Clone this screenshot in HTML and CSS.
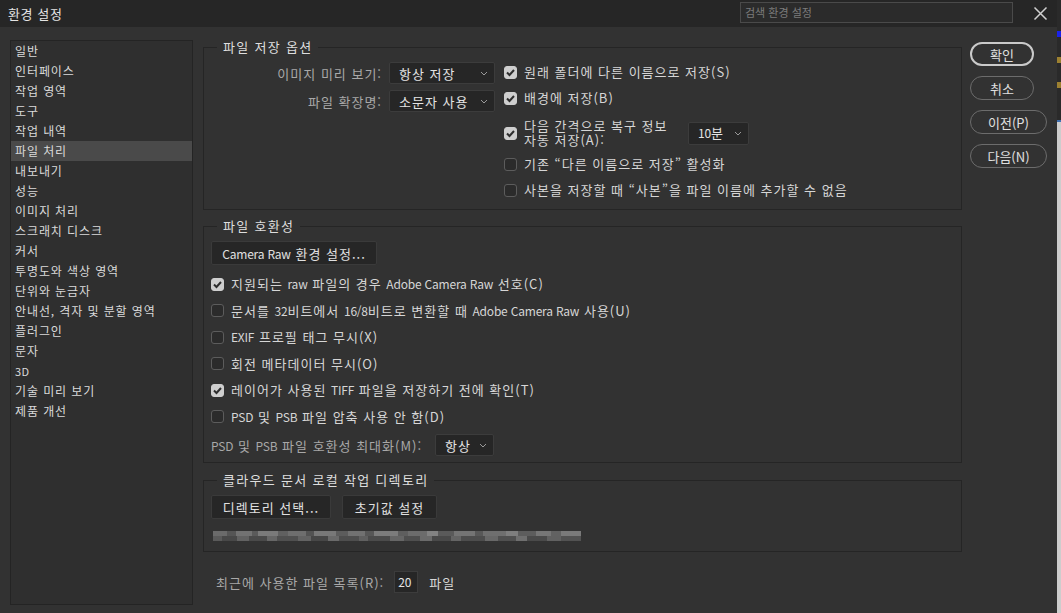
FILE: index.html
```html
<!DOCTYPE html>
<html lang="ko">
<head>
<meta charset="utf-8">
<title>환경 설정</title>
<link rel="stylesheet" href="styles.css">
</head>
<body>
<div class="screen">
  <div class="dialog">
    <div class="titlebar">
      <div class="title">환경 설정</div>
      <div class="search">검색 환경 설정</div>
      <svg class="close" width="15" height="15" viewBox="0 0 15 15"><path d="M1.5 1.5 L13.5 13.5 M13.5 1.5 L1.5 13.5" stroke="#d0d0d0" stroke-width="1.5" fill="none"/></svg>
    </div>
    <div class="main">
      <ul class="nav">
        <li>일반</li>
        <li>인터페이스</li>
        <li>작업 영역</li>
        <li>도구</li>
        <li>작업 내역</li>
        <li class="sel">파일 처리</li>
        <li>내보내기</li>
        <li>성능</li>
        <li>이미지 처리</li>
        <li>스크래치 디스크</li>
        <li>커서</li>
        <li>투명도와 색상 영역</li>
        <li>단위와 눈금자</li>
        <li>안내선, 격자 및 분할 영역</li>
        <li>플러그인</li>
        <li>문자</li>
        <li class="nav-lat">3D</li>
        <li>기술 미리 보기</li>
        <li>제품 개선</li>
      </ul>

      <div class="content">
        <fieldset class="group g1">
          <legend>파일 저장 옵션</legend>
          <div class="g1-cols">
            <div class="g1-left">
              <div class="frow">
                <span class="lbl">이미지 미리 보기:</span>
                <div class="select s-preview"><span>항상 저장</span><svg class="chev" width="8" height="5" viewBox="0 0 8 5"><path d="M1 1 L4 4 L7 1" stroke="#9a9a9a" fill="none"/></svg></div>
              </div>
              <div class="frow">
                <span class="lbl">파일 확장명:</span>
                <div class="select s-preview"><span>소문자 사용</span><svg class="chev" width="8" height="5" viewBox="0 0 8 5"><path d="M1 1 L4 4 L7 1" stroke="#9a9a9a" fill="none"/></svg></div>
              </div>
            </div>
            <div class="g1-right">
              <div class="cbrow"><span class="cb on"><svg width="13" height="13" viewBox="0 0 13 13"><path d="M3 6.5 L5.5 9 L10 4" stroke="#2e2e2e" stroke-width="2" fill="none"/></svg></span><span>원래 폴더에 다른 이름으로 저장(S)</span></div>
              <div class="cbrow"><span class="cb on"><svg width="13" height="13" viewBox="0 0 13 13"><path d="M3 6.5 L5.5 9 L10 4" stroke="#2e2e2e" stroke-width="2" fill="none"/></svg></span><span>배경에 저장(B)</span></div>
              <div class="cbrow tall"><span class="cb on"><svg width="13" height="13" viewBox="0 0 13 13"><path d="M3 6.5 L5.5 9 L10 4" stroke="#2e2e2e" stroke-width="2" fill="none"/></svg></span><span class="twoline">다음 간격으로 복구 정보<br>자동 저장(A):</span>
                <div class="select s-min"><span><span class="lat">10</span>분</span><svg class="chev" width="8" height="5" viewBox="0 0 8 5"><path d="M1 1 L4 4 L7 1" stroke="#9a9a9a" fill="none"/></svg></div>
              </div>
              <div class="cbrow"><span class="cb"></span><span>기존 “다른 이름으로 저장” 활성화</span></div>
              <div class="cbrow"><span class="cb"></span><span>사본을 저장할 때 “사본”을 파일 이름에 추가할 수 없음</span></div>
            </div>
          </div>
        </fieldset>

        <fieldset class="group g2">
          <legend>파일 호환성</legend>
          <div class="btn btn-raw"><span><span class="lat">Camera Raw</span> 환경 설정...</span></div>
          <div class="cblist">
            <div class="cbrow r2"><span class="cb on"><svg width="13" height="13" viewBox="0 0 13 13"><path d="M3 6.5 L5.5 9 L10 4" stroke="#2e2e2e" stroke-width="2" fill="none"/></svg></span><span>지원되는 <span class="lat">raw</span> 파일의 경우 <span class="lat">Adobe Camera Raw</span> 선호(C)</span></div>
            <div class="cbrow r2"><span class="cb"></span><span>문서를 <span class="lat">32</span>비트에서 <span class="lat">16/8</span>비트로 변환할 때 <span class="lat">Adobe Camera Raw</span> 사용(U)</span></div>
            <div class="cbrow r2"><span class="cb"></span><span><span class="lat">EXIF</span> 프로필 태그 무시(X)</span></div>
            <div class="cbrow r2"><span class="cb"></span><span>회전 메타데이터 무시(O)</span></div>
            <div class="cbrow r2"><span class="cb on"><svg width="13" height="13" viewBox="0 0 13 13"><path d="M3 6.5 L5.5 9 L10 4" stroke="#2e2e2e" stroke-width="2" fill="none"/></svg></span><span>레이어가 사용된 <span class="lat">TIFF</span> 파일을 저장하기 전에 확인(T)</span></div>
            <div class="cbrow r2"><span class="cb"></span><span><span class="lat">PSD</span> 및 <span class="lat">PSB</span> 파일 압축 사용 안 함(D)</span></div>
          </div>
          <div class="psdrow">
            <span class="lbl"><span class="lat">PSD</span> 및 <span class="lat">PSB</span> 파일 호환성 최대화(M):</span>
            <div class="select s-psd"><span>항상</span><svg class="chev" width="8" height="5" viewBox="0 0 8 5"><path d="M1 1 L4 4 L7 1" stroke="#9a9a9a" fill="none"/></svg></div>
          </div>
        </fieldset>

        <fieldset class="group g3">
          <legend>클라우드 문서 로컬 작업 디렉토리</legend>
          <div class="btnrow">
            <div class="btn btn-dir">디렉토리 선택...</div>
            <div class="btn btn-reset">초기값 설정</div>
          </div>
          <svg class="blur" width="368" height="10" viewBox="0 0 368 10">
            <rect x="0" y="0" width="368" height="10" fill="#4c4c4c"/>
            <rect x="0" y="0" width="14" height="5" fill="#6a6a6a"/>
            <rect x="14" y="0" width="9" height="5" fill="#555"/>
            <rect x="23" y="0" width="16" height="5" fill="#727272"/>
            <rect x="39" y="0" width="6" height="5" fill="#5a5a5a"/>
            <rect x="45" y="0" width="20" height="5" fill="#7a7a7a"/>
            <rect x="65" y="0" width="10" height="5" fill="#606060"/>
            <rect x="75" y="0" width="18" height="5" fill="#6e6e6e"/>
            <rect x="93" y="0" width="8" height="5" fill="#535353"/>
            <rect x="101" y="0" width="22" height="5" fill="#787878"/>
            <rect x="123" y="0" width="12" height="5" fill="#5c5c5c"/>
            <rect x="135" y="0" width="17" height="5" fill="#717171"/>
            <rect x="152" y="0" width="9" height="5" fill="#575757"/>
            <rect x="161" y="0" width="24" height="5" fill="#7c7c7c"/>
            <rect x="185" y="0" width="10" height="5" fill="#5e5e5e"/>
            <rect x="195" y="0" width="19" height="5" fill="#6c6c6c"/>
            <rect x="214" y="0" width="11" height="5" fill="#828282"/>
            <rect x="225" y="0" width="16" height="5" fill="#5a5a5a"/>
            <rect x="241" y="0" width="21" height="5" fill="#747474"/>
            <rect x="262" y="0" width="8" height="5" fill="#585858"/>
            <rect x="270" y="0" width="23" height="5" fill="#6f6f6f"/>
            <rect x="293" y="0" width="12" height="5" fill="#7e7e7e"/>
            <rect x="305" y="0" width="18" height="5" fill="#5d5d5d"/>
            <rect x="323" y="0" width="15" height="5" fill="#767676"/>
            <rect x="338" y="0" width="10" height="5" fill="#626262"/>
            <rect x="348" y="0" width="20" height="5" fill="#7a7a7a"/>
            <rect x="0" y="5" width="9" height="5" fill="#5a5a5a"/>
            <rect x="9" y="5" width="15" height="5" fill="#484848"/>
            <rect x="24" y="5" width="12" height="5" fill="#626262"/>
            <rect x="36" y="5" width="18" height="5" fill="#4a4a4a"/>
            <rect x="54" y="5" width="10" height="5" fill="#676767"/>
            <rect x="64" y="5" width="21" height="5" fill="#505050"/>
            <rect x="85" y="5" width="13" height="5" fill="#636363"/>
            <rect x="98" y="5" width="17" height="5" fill="#474747"/>
            <rect x="115" y="5" width="11" height="5" fill="#6a6a6a"/>
            <rect x="126" y="5" width="20" height="5" fill="#4e4e4e"/>
            <rect x="146" y="5" width="9" height="5" fill="#606060"/>
            <rect x="155" y="5" width="22" height="5" fill="#4b4b4b"/>
            <rect x="177" y="5" width="14" height="5" fill="#666"/>
            <rect x="191" y="5" width="16" height="5" fill="#4f4f4f"/>
            <rect x="207" y="5" width="12" height="5" fill="#6b6b6b"/>
            <rect x="219" y="5" width="19" height="5" fill="#494949"/>
            <rect x="238" y="5" width="10" height="5" fill="#646464"/>
            <rect x="248" y="5" width="24" height="5" fill="#4d4d4d"/>
            <rect x="272" y="5" width="13" height="5" fill="#686868"/>
            <rect x="285" y="5" width="18" height="5" fill="#505050"/>
            <rect x="303" y="5" width="11" height="5" fill="#6f6f6f"/>
            <rect x="314" y="5" width="20" height="5" fill="#4a4a4a"/>
            <rect x="334" y="5" width="14" height="5" fill="#616161"/>
            <rect x="348" y="5" width="20" height="5" fill="#525252"/>
          </svg>
        </fieldset>

        <div class="recent">
          <span class="lbl">최근에 사용한 파일 목록(R):</span>
          <div class="num">20</div>
          <span>파일</span>
        </div>
      </div>

      <div class="actions">
        <div class="pill primary">확인</div>
        <div class="pill">취소</div>
        <div class="pill wide">이전(P)</div>
        <div class="pill wide">다음(N)</div>
      </div>
    </div>
  </div>
  <div class="edge">
    <div class="e-dark h31"></div>
    <div class="e-blue"></div>
    <div class="e-dark h20"></div>
    <div class="e-gold"></div>
    <div class="e-dark h19"></div>
    <div class="e-gold"></div>
    <div class="e-dark h32"></div>
    <div class="e-line"></div>
    <div class="e-light"></div>
  </div>
</div>
</body>
</html>
```

FILE: styles.css
```css
* { box-sizing: border-box; }
html, body { margin: 0; padding: 0; }
body {
  width: 1061px;
  height: 613px;
  overflow: hidden;
  background: #323232;
  font-family: "Noto Sans CJK KR", sans-serif;
  font-size: 13px;
  color: #d6d6d6;
}
.lat { letter-spacing: -0.2px; font-size: 12px; }
.screen { display: flex; height: 613px; }
.dialog { width: 1057px; display: flex; flex-direction: column; background: #323232; }

.titlebar { height: 27px; flex: none; background: #262626; display: flex; align-items: center; }
.title { padding-left: 8px; font-size: 13px; line-height: 27px; color: #e4e4e4; letter-spacing: 0.6px; }
.search {
  margin-left: auto; align-self: flex-start; margin-top: 2px;
  width: 273px; height: 21px;
  border: 1px solid #4a4a4a; background: #2b2b2b;
  color: #7c7c7c; font-size: 11px; line-height: 19px; padding-left: 4px;
}
.close { margin: 0 9px 0 20px; flex: none; }

.main { display: flex; padding-top: 11px; flex: 1; }

.nav {
  margin: 2px 0 0 10px; padding: 0; list-style: none;
  width: 183px; height: 565px; flex: none;
  border: 1px solid #242424; background: #2f2f2f;
  font-size: 12px; letter-spacing: 0.9px;
}
.nav li { height: 20px; line-height: 20px; padding-left: 4px; color: #dadada; white-space: nowrap; }
.nav li.sel { background: #4a4a4a; }
.nav li.nav-lat { font-size: 11px; letter-spacing: 0.3px; }

.content { margin-left: 10px; width: 759px; flex: none; letter-spacing: 1px; }

.group { margin: 0; border: 1px solid #252525; min-width: 0; padding: 6px 0 2px 7px; }
.group legend { margin-left: 6px; padding: 0 6px; font-size: 13px; line-height: 18px; color: #dedede; letter-spacing: 1.3px; }

.g1 { padding: 3px 0 6px 7px; margin-bottom: 7px; }
.g1-cols { display: flex; }
.g1-left { width: 284px; flex: none; }
.frow { height: 28px; display: flex; align-items: center; justify-content: flex-end; gap: 7px; }
.lbl { color: #a8a8a8; white-space: nowrap; }
.g1-right { margin-left: 9px; display: flex; flex-direction: column; }

.cbrow { height: 26px; display: flex; align-items: center; white-space: nowrap; line-height: 16px; }
.cbrow.tall { height: 36px; margin-top: 4px; }
.twoline { width: 164px; line-height: 14px; }
.cb {
  width: 13px; height: 13px; flex: none; margin-right: 7px;
  border: 1px solid #5c5c5c; background: #2b2b2b; border-radius: 3px;
  display: flex; align-items: center; justify-content: center;
}
.cb.on { background: #cfcfcf; border-color: #cfcfcf; }
.cb.on svg { display: block; margin: -1px; }

.select {
  height: 22px; display: flex; align-items: center; justify-content: space-between;
  background: #262626; border: 1px solid #3c3c3c; border-radius: 2px;
  padding: 0 6px 0 9px; color: #e4e4e4; white-space: nowrap;
}
.s-preview { width: 106px; }
.s-min { width: 61px; height: 23px; }
.s-psd { width: 59px; }
.chev { flex: none; }

.g2 { margin-bottom: 8px; }
.btn {
  height: 24px; display: flex; align-items: center; justify-content: center;
  background: #262626; border: 1px solid #3a3a3a; border-radius: 2px;
  color: #e0e0e0; white-space: nowrap;
}
.btn-raw { width: 166px; }
.cblist { margin-top: 6px; }
.cbrow.r2 { height: 26.5px; }
.psdrow { height: 30px; display: flex; align-items: center; gap: 13px; }

.g3 { padding: 6px 0 10px 7px; }
.btnrow { display: flex; gap: 11px; }
.btn-dir { width: 120px; }
.btn-reset { width: 95px; }
.blur { display: block; margin: 12px 0 0 2px; }

.recent { margin-top: 19px; padding-left: 13px; height: 22px; display: flex; align-items: center; }
.recent .lbl { margin-right: 10px; }
.num {
  width: 24px; height: 22px; background: #262626; border: 1px solid #3c3c3c;
  color: #e4e4e4; line-height: 20px; padding-left: 3px; margin-right: 11px;
  font-size: 12px; letter-spacing: 0;
}

.actions { margin: 4px 0 0 8px; display: flex; flex-direction: column; gap: 10px; }
.pill {
  width: 64px; height: 24px; border: 1.5px solid #6c6c6c; border-radius: 12px;
  display: flex; align-items: center; justify-content: center;
  color: #e0e0e0; white-space: nowrap;
}
.pill.primary { border: 2px solid #cacaca; }
.pill.wide { width: 77px; }

.edge { width: 4px; display: flex; flex-direction: column; }
.e-dark { background: #2a2a2a; }
.h31 { height: 31px; }
.h20 { height: 20px; }
.h19 { height: 19px; }
.h32 { height: 32px; }
.e-blue { height: 6px; background: #1a22e8; }
.e-gold { height: 6px; background: #9c8030; }
.e-line { height: 2px; background: #3f6fb0; }
.e-light { flex: 1; background: #cdcdcd; }
```
